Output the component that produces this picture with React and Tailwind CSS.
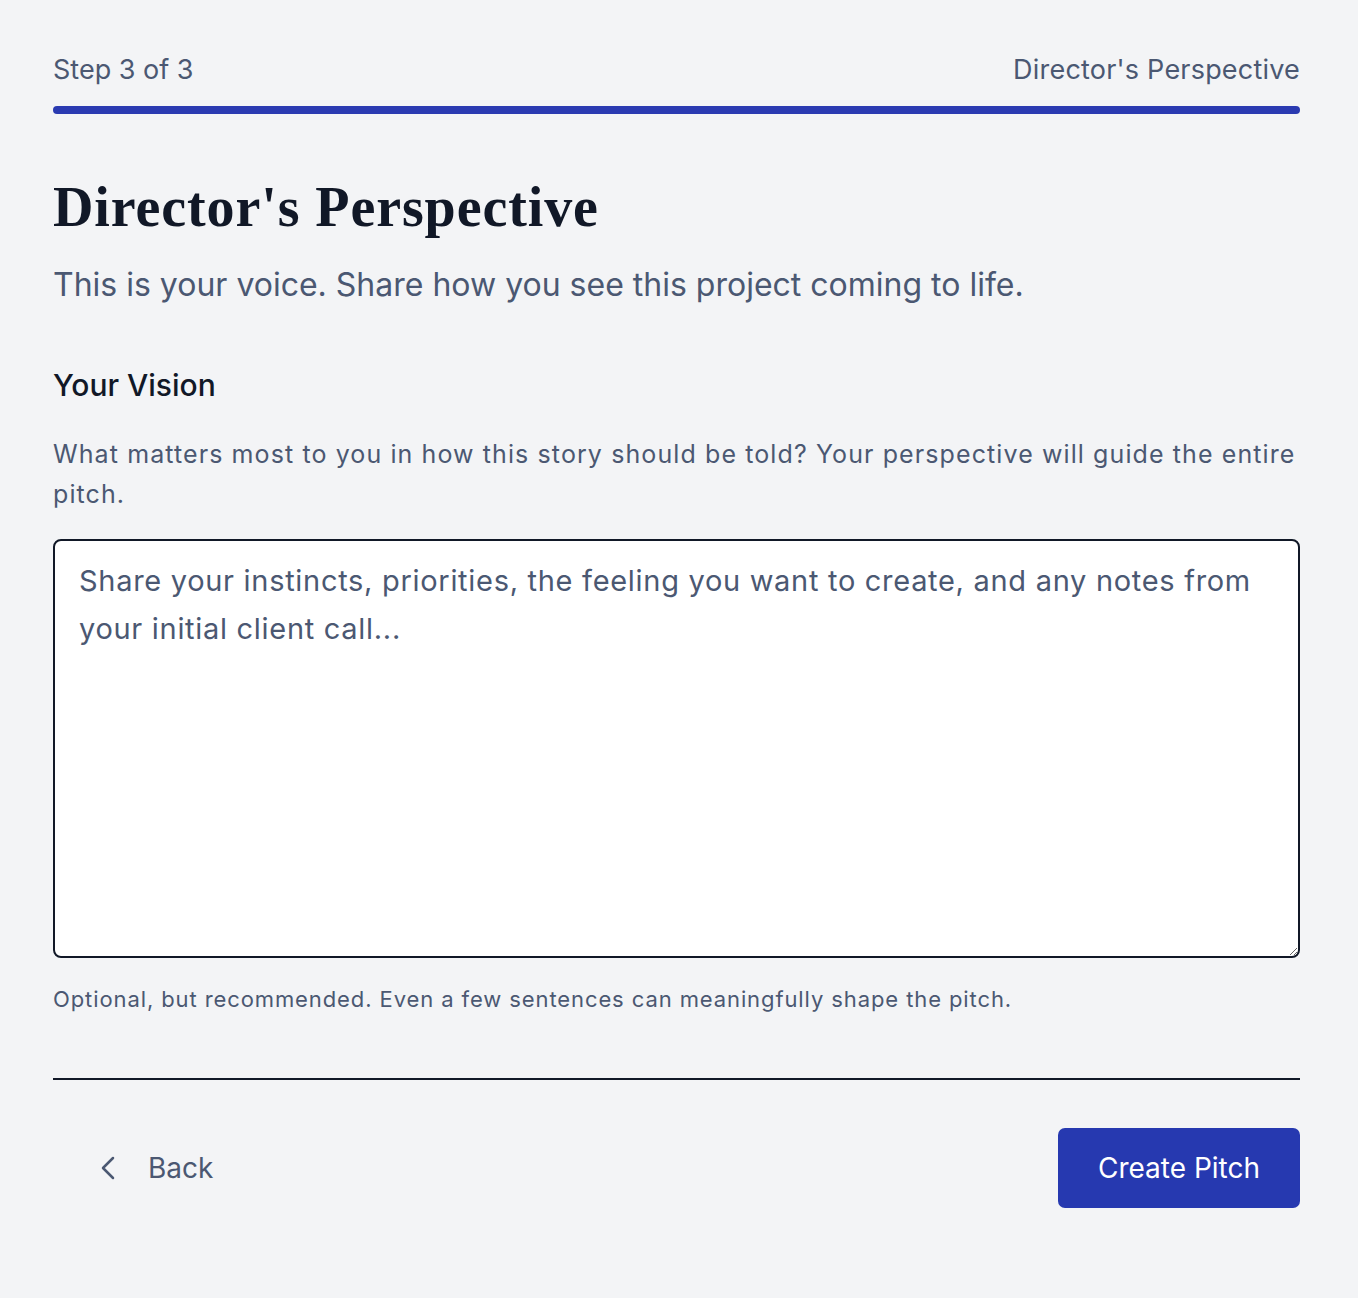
import React from 'react';
import { ChevronLeft } from 'lucide-react';

const App = () => {
  return (
    <div className="min-h-[1298px] bg-[#f3f4f6] font-['Inter',sans-serif] text-[#4b5872]">
      <div className="w-[1247px] ml-[53px] pt-[52px]">
        <div className="flex justify-between items-center text-[27px] leading-[36px]">
          <span>Step 3 of 3</span>
          <span className="tracking-[0.2px]">Director's Perspective</span>
        </div>
        <div className="mt-[18px] h-[8px] rounded-full bg-[#2a3ab1]" />

        <h1 className="mt-[57px] font-['Liberation_Serif',serif] font-bold text-[56px] leading-[72px] tracking-[0.9px] text-[#111827]">
          Director's Perspective
        </h1>
        <p className="mt-[20px] text-[32px] leading-[44px]">
          This is your voice. Share how you see this project coming to life.
        </p>

        <label className="block mt-[58px] text-[30px] leading-[40px] font-medium text-[#111827]">
          Your Vision
        </label>
        <p className="mt-[29px] text-[25px] leading-[40px] tracking-[1.1px]">
          What matters most to you in how this story should be told? Your perspective will guide the entire pitch.
        </p>

        <textarea
          className="mt-[25px] block w-full h-[419px] rounded-[8px] border-2 border-[#111827] bg-white pl-[24px] pr-[24px] pt-[16px] pb-[16px] text-[29px] leading-[48px] tracking-[0.7px] text-[#111827] placeholder:text-[#4b5872] outline-none resize-y"
          placeholder="Share your instincts, priorities, the feeling you want to create, and any notes from your initial client call..."
        />
        <p className="mt-[25px] text-[22px] leading-[32px] tracking-[0.9px]">
          Optional, but recommended. Even a few sentences can meaningfully shape the pitch.
        </p>

        <div className="mt-[63px] border-t-2 border-[#111827]" />

        <div className="mt-[48px] flex justify-between items-center">
          <button className="flex items-center gap-[20px] h-[80px] pl-[35px] pr-[20px] text-[28px]">
            <ChevronLeft size={40} strokeWidth={1.5} />
            <span>Back</span>
          </button>
          <button className="h-[80px] px-[40px] rounded-[7px] bg-[#2639b0] text-white text-[28px]">
            Create Pitch
          </button>
        </div>
      </div>
    </div>
  );
};

export default App;
